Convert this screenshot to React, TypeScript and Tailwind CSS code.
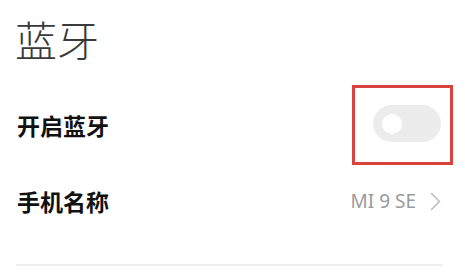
const cjk = "font-['Noto_Sans_CJK_SC','Noto_Sans',sans-serif]";

function Toggle() {
  return (
    <div className="flex h-[37px] w-[68px] items-center rounded-full bg-[#ececec] pl-[9px]">
      <div className="h-[20px] w-[20px] rounded-full bg-white" />
    </div>
  );
}

function Chevron() {
  return (
    <svg width="11" height="19" viewBox="0 0 11 19" fill="none">
      <path d="M1.5 1.5 L9.5 9.5 L1.5 17.5" stroke="#bdbdbd" strokeWidth="1.6" strokeLinecap="round" strokeLinejoin="round" />
    </svg>
  );
}

export default function App() {
  return (
    <div className={`flex h-[273px] w-[465px] flex-col overflow-hidden bg-white ${cjk}`}>
      <h1 className="pl-[15px] pt-[14px] text-[42px] font-light leading-[50px] text-[#3a3a3a]">蓝牙</h1>

      <div className="mt-[21px] flex h-[80px] items-center justify-between pl-[17px] pr-[12px]">
        <span className="text-[23px] font-bold text-[#111]">开启蓝牙</span>
        <div className="h-[80px] w-[101px] border-[3px] border-[#d9433e] pl-[18px] pt-[17px]">
          <Toggle />
        </div>
      </div>

      <div className="flex h-[72px] items-center justify-between pl-[17px] pr-[24px]">
        <span className="text-[23px] font-bold text-[#111]">手机名称</span>
        <div className="flex items-center gap-[14px]">
          <span className="font-['Noto_Sans',sans-serif] text-[19px] text-[#9a9a9a]">MI 9 SE</span>
          <Chevron />
        </div>
      </div>

      <div className="ml-[16px] mr-[22px] mt-[27px] h-[2px] bg-[#efefef]" />
    </div>
  );
}
